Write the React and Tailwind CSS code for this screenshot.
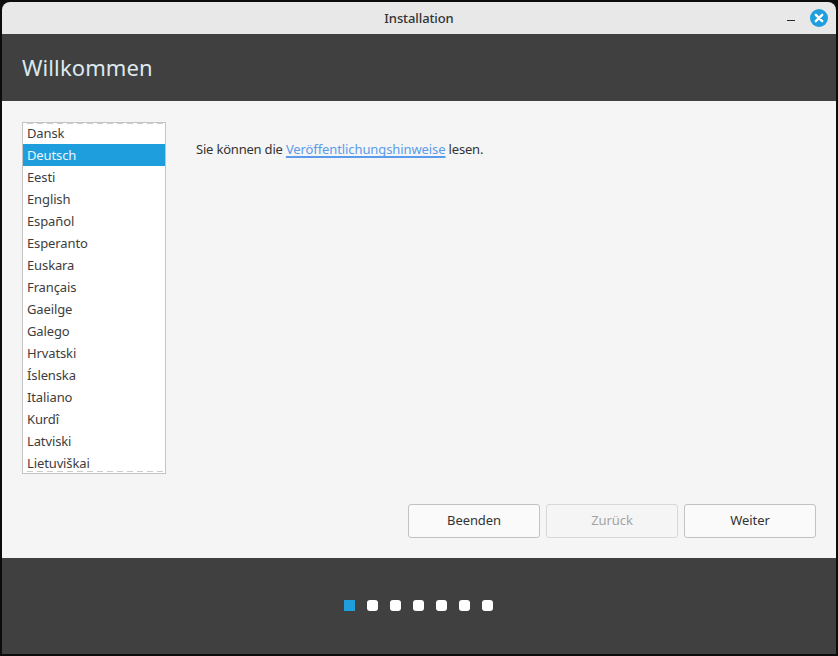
const languages = [
  "Dansk",
  "Deutsch",
  "Eesti",
  "English",
  "Español",
  "Esperanto",
  "Euskara",
  "Français",
  "Gaeilge",
  "Galego",
  "Hrvatski",
  "Íslenska",
  "Italiano",
  "Kurdî",
  "Latviski",
  "Lietuviškai",
];

function App() {
  return (
    <div className="w-[838px] h-[656px] bg-[#0c0c0c] p-[2px] font-['Noto_Sans','Open_Sans',sans-serif] text-[13px] text-[#3d3d3d] overflow-hidden">
      <div className="h-[652px] flex flex-col rounded-t-[8px] overflow-hidden">
        {/* title bar */}
        <div className="relative h-[32px] shrink-0 bg-[#e8e8e8] flex items-center justify-center pt-[2px]">
          <span className="text-[13px] font-medium text-[#333333] tracking-[-0.1px]">Installation</span>
          <div className="absolute right-[8px] top-[7px] flex items-center gap-[15px]">
            <div className="w-[8px] h-[1px] bg-[#2a2a2a] mt-[5px]"></div>
            <svg width="18" height="18" viewBox="0 0 18 18">
              <circle cx="9" cy="9" r="9" fill="#1f9ede" />
              <path d="M5.8 5.8 L12.2 12.2 M12.2 5.8 L5.8 12.2" stroke="#ffffff" strokeWidth="2.4" strokeLinecap="round" />
            </svg>
          </div>
        </div>

        {/* header */}
        <div className="h-[67px] shrink-0 bg-[#404040] flex items-center pl-[20px]">
          <h1 className="text-[22px] text-[#dce8ee] tracking-[0.1px]">Willkommen</h1>
        </div>

        {/* content */}
        <div className="flex-1 bg-[#f5f5f5] flex flex-col pt-[21px] pl-[20px] pr-[20px] pb-[20px]">
          <div className="flex flex-1">
            <div className="relative w-[144px] h-[352px] bg-white border border-[#c4c4c4] overflow-hidden">
              <div className="absolute top-0 left-[4px] right-0 h-[1px] bg-[repeating-linear-gradient(90deg,#cccccc_0,#cccccc_6px,transparent_6px,transparent_10px)]"></div>
              {languages.map((lang, i) => (
                <div
                  key={lang}
                  className={`${i === 0 ? "h-[21px]" : "h-[22px] pt-[1px]"} pl-[4px] leading-[21px] whitespace-nowrap tracking-[-0.12px] ${
                    lang === "Deutsch" ? "bg-[#1f9ede] text-[#e8f6fd]" : ""
                  }`}
                >
                  {lang}
                </div>
              ))}
              <div className="absolute bottom-[1px] left-[4px] right-0 h-[1px] bg-[repeating-linear-gradient(90deg,#cccccc_0,#cccccc_6px,transparent_6px,transparent_10px)]"></div>
            </div>
            <p className="ml-[30px] mt-[18px] leading-[18px] text-[#333333] tracking-[-0.2px]">
              Sie können die{" "}
              <a href="#" className="text-[#5b9bec] underline underline-offset-2 decoration-[1.5px] [text-decoration-skip-ink:none] tracking-[-0.1px]">
                Veröffentlichungshinweise
              </a>{" "}
              lesen.
            </p>
          </div>
          <div className="flex justify-end gap-[6px]">
            <button className="w-[132px] h-[34px] rounded-[3px] border border-[#c2c2c2] bg-[#fafafa] text-[#333333] tracking-[-0.1px]">Beenden</button>
            <button disabled className="w-[132px] h-[34px] rounded-[3px] border border-[#d8d8d8] bg-[#f5f5f5] text-[#a3a3a3] tracking-[-0.1px]">Zurück</button>
            <button className="w-[132px] h-[34px] rounded-[3px] border border-[#c2c2c2] bg-[#fafafa] text-[#333333] tracking-[-0.1px]">Weiter</button>
          </div>
        </div>

        {/* footer with step dots */}
        <div className="h-[96px] shrink-0 bg-[#404040] flex items-center justify-center gap-[12px] pr-[1px] pb-[1px]">
          <div className="w-[11px] h-[11px] bg-[#1f9ede]"></div>
          {[1, 2, 3, 4, 5, 6].map((n) => (
            <div key={n} className="w-[11px] h-[11px] bg-white rounded-[3px]"></div>
          ))}
        </div>
      </div>
    </div>
  );
}

export default App;
